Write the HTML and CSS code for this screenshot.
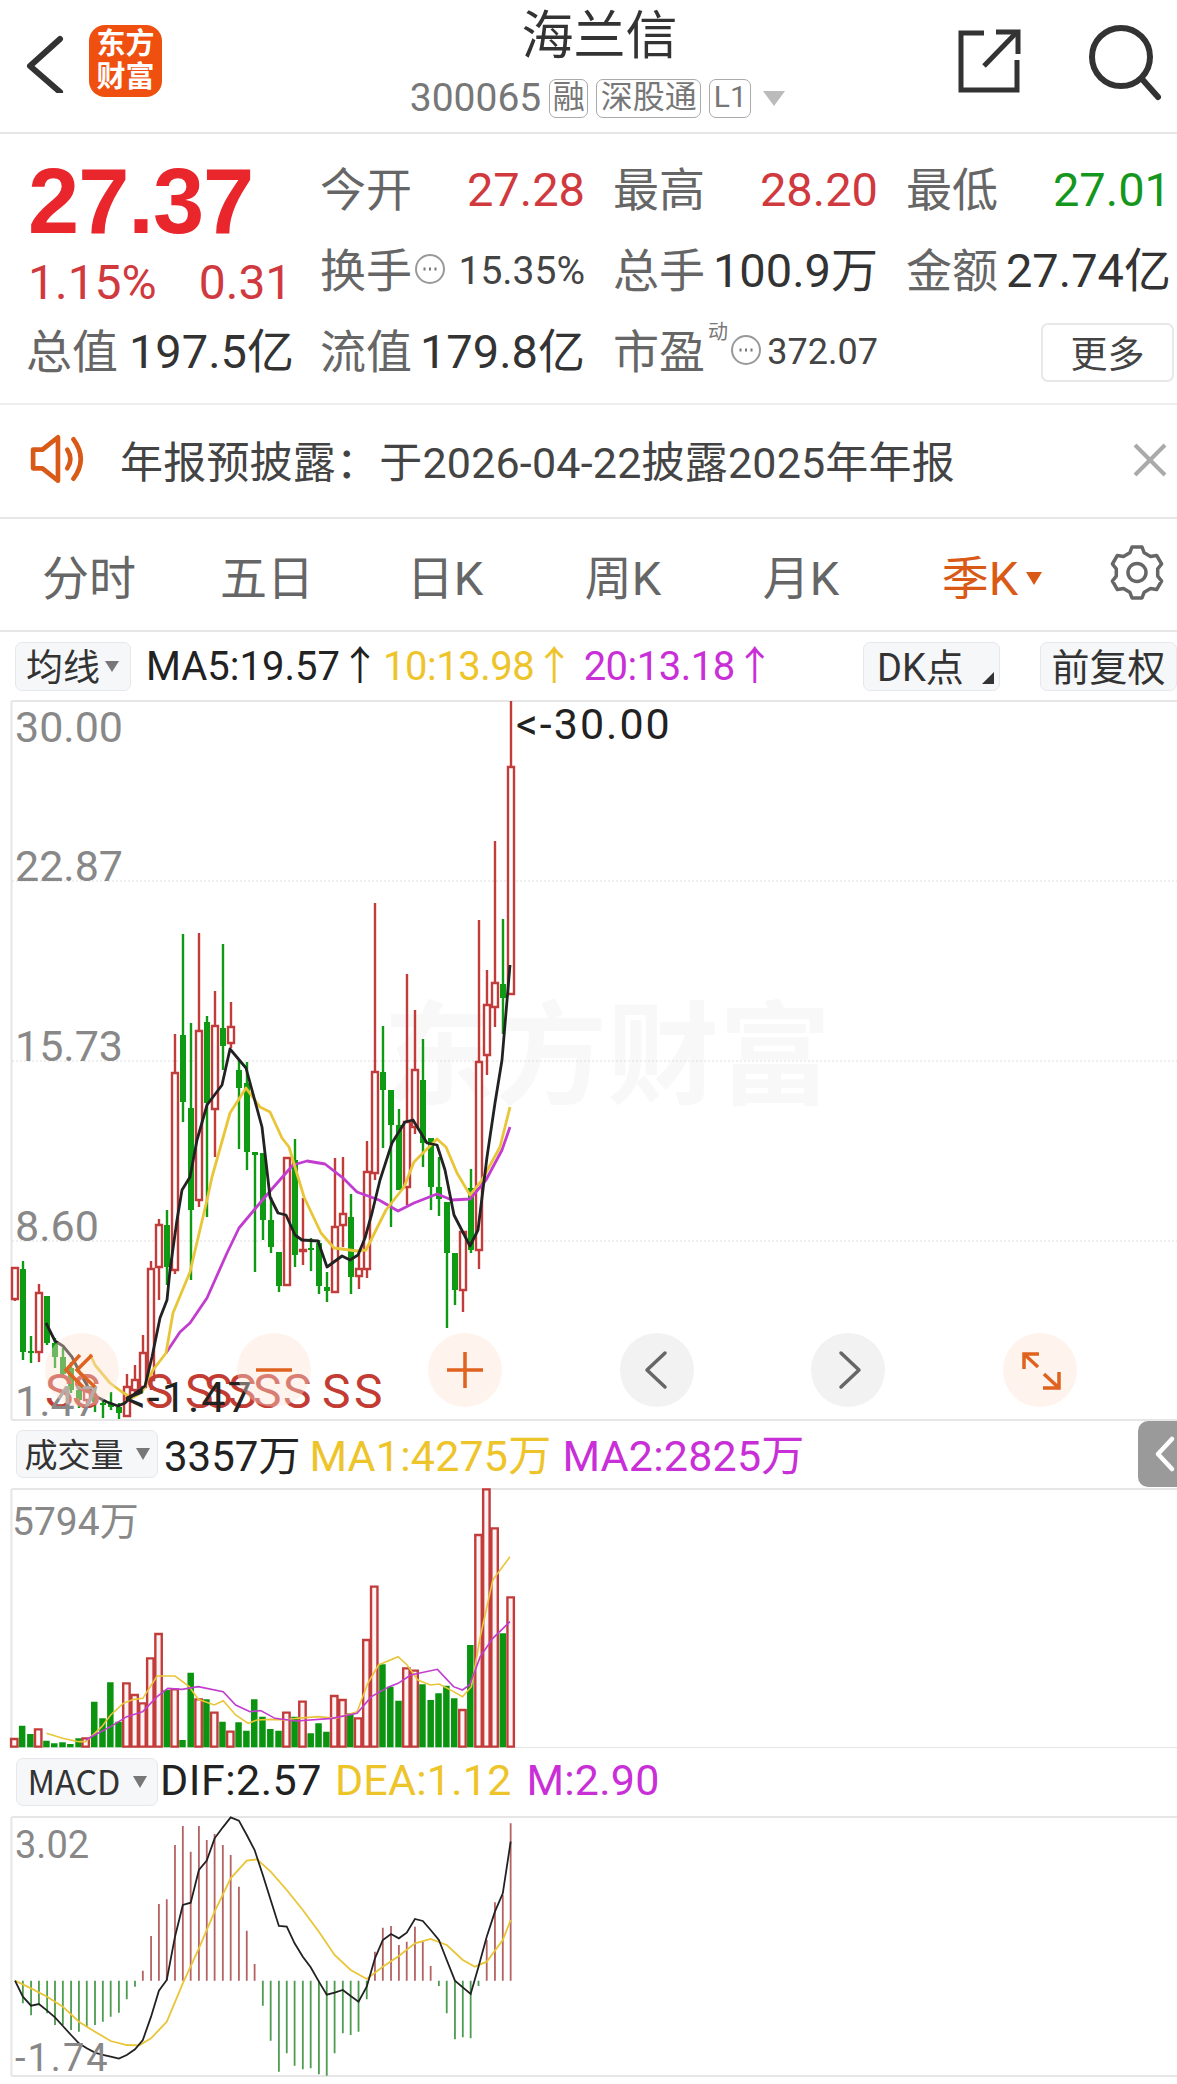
FILE: index.html
```html
<!DOCTYPE html>
<html lang="zh">
<head>
<meta charset="utf-8">
<title>海兰信</title>
<link rel="stylesheet" href="styles.css">
</head>
<body>
<header class="top">
  <div class="top-left">
    <svg class="back" viewBox="0 0 48 64" width="48" height="64"><path d="M38 10 L8 37 L38 63"/></svg>
    <div class="logo"><span>东方</span><span>财富</span></div>
  </div>
  <div class="top-mid">
    <div class="name">海兰信</div>
    <div class="sub">
      <span class="code">300065</span>
      <span class="tag tag-a">融</span>
      <span class="tag tag-b">深股通</span>
      <span class="tag tag-c">L1</span>
      <span class="sub-tri"></span>
    </div>
  </div>
  <div class="top-right">
    <svg class="ico-share" viewBox="0 0 70 70" width="70" height="70"><path d="M30 7 H7 V64 H63 V34"/><path d="M30 40 L63 6"/><path d="M42 6 H64 V28"/></svg>
    <svg class="ico-search" viewBox="0 0 80 80" width="80" height="80"><circle cx="35" cy="35" r="29"/><path d="M56 57 L72 75"/></svg>
  </div>
</header>

<section class="quote">
  <div class="quote-left">
    <div class="price">27.37</div>
    <div class="change"><span>1.15%</span><span>0.31</span></div>
    <div class="stat stat-total"><span class="lbl">总值</span><span class="val">197.5亿</span></div>
  </div>
  <div class="quote-grid">
    <div class="stat"><span class="lbl">今开</span><span class="val up">27.28</span></div>
    <div class="stat"><span class="lbl">最高</span><span class="val up">28.20</span></div>
    <div class="stat"><span class="lbl">最低</span><span class="val down">27.01</span></div>
    <div class="stat"><span class="lbl">换手</span><svg class="info" viewBox="0 0 32 32" width="32" height="32"><circle cx="16" cy="16" r="14"/><path class="dots" d="M9.500 16h2M15 16h2M20.500 16h2"/></svg><span class="val small">15.35%</span></div>
    <div class="stat"><span class="lbl">总手</span><span class="val">100.9万</span></div>
    <div class="stat"><span class="lbl">金额</span><span class="val">27.74亿</span></div>
    <div class="stat"><span class="lbl">流值</span><span class="val">179.8亿</span></div>
    <div class="stat"><span class="lbl">市盈</span><span class="sup">动</span><svg class="info" viewBox="0 0 32 32" width="32" height="32"><circle cx="16" cy="16" r="14"/><path class="dots" d="M9.500 16h2M15 16h2M20.500 16h2"/></svg><span class="val smaller">372.07</span></div>
    <div class="stat stat-end"><button class="more">更多</button></div>
  </div>
</section>

<section class="notice">
  <svg class="speaker" viewBox="0 0 56 48" width="58" height="50"><path d="M3 15 H12 L27 3 V45 L12 33 H3 Z"/><path d="M36 15 Q42 24 36 33"/><path d="M42 5 Q56 24 42 43"/></svg>
  <span class="notice-text">年报预披露：于2026-04-22披露2025年年报</span>
  <svg class="close" viewBox="0 0 34 34" width="34" height="34"><path d="M2 2 L32 32 M32 2 L2 32"/></svg>
</section>

<nav class="tabs">
  <span class="tab">分时</span>
  <span class="tab">五日</span>
  <span class="tab">日K</span>
  <span class="tab">周K</span>
  <span class="tab">月K</span>
  <span class="tab tab-on">季K<i class="tab-tri"></i></span>
  <svg class="gear" viewBox="0 0 54 54" width="54" height="55"><path d="M19.800 7.300 L22 1.500 H32 L34.200 7.300 L40.500 10.900 L46.600 9.900 L51.600 18.500 L47.700 23.400 V30.600 L51.600 35.500 L46.600 44.100 L40.500 43.100 L34.200 46.700 L32 52.500 H22 L19.800 46.700 L13.500 43.100 L7.400 44.100 L2.400 35.500 L6.300 30.600 V23.400 L2.400 18.500 L7.400 9.900 L13.500 10.900 Z"/><circle cx="27" cy="27" r="9"/></svg>
</nav>

<div class="legend">
  <span class="pill pill-ma">均线<i class="tri"></i></span>
  <span class="leg c-black">MA5:19.57↑</span>
  <span class="leg leg-b c-gold">10:13.98↑</span>
  <span class="leg leg-c c-mag">20:13.18↑</span>
  <span class="pill pill-dk">DK点<i class="corner"></i></span>
  <span class="pill pill-fq">前复权</span>
</div>

<section class="chart chart-k">
  <div class="watermark">东方财富</div>
  <svg class="plot" viewBox="0 700 1177 722" width="1177" height="722">
    <path class="axis" d="M11.500 701 V1420 M11.500 701 H1177 M11.500 1420 H1177"/>
    <path class="grid" d="M12 881 H1177 M12 1061 H1177 M12 1241 H1177"/>
    <path class="wick-r" d="M15 1268V1301M39 1284V1362M87 1380V1404M127 1374V1417M135 1365V1397M143 1335V1390M151 1261V1390M159 1219V1300M175 1034V1274M199 933V1207M215 991V1157M231 1002V1048M287 1158V1286M303 1198V1265M335 1158V1293M343 1157V1247M359 1250V1289M367 1141V1278M375 903V1180M407 974V1205M415 1010V1134M463 1232V1312M479 920V1269M487 970V1075M495 841V1027M511 701V995"/>
    <path class="body-r" d="M12 1268h6v31h-6zM36 1293h6v59h-6zM84 1388h6v12h-6zM124 1387h6v29h-6zM132 1380h6v10h-6zM140 1353h6v34h-6zM148 1269h6v111h-6zM156 1225h6v42h-6zM172 1073h6v197h-6zM196 1031h6v169h-6zM212 1026h6v83h-6zM228 1027h6v16h-6zM284 1158h6v127h-6zM300 1250h6v1h-6zM332 1227h6v65h-6zM340 1214h6v11h-6zM356 1269h6v7h-6zM364 1172h6v97h-6zM372 1072h6v101h-6zM404 1122h6v65h-6zM412 1070h6v57h-6zM460 1232h6v58h-6zM476 1062h6v188h-6zM484 1005h6v50h-6zM492 983h6v24h-6zM508 767h6v227h-6z"/>
    <path class="wick-g" d="M23 1261V1360M31 1336V1363M47 1296V1345M55 1338V1368M63 1348V1375M71 1362V1393M79 1380V1408M95 1390V1412M103 1400V1418M111 1392V1410M119 1403V1419M167 1210V1285M183 934V1122M191 1023V1280M207 1016V1217M223 944V1070M239 1060V1149M247 1062V1170M255 1152V1272M263 1153V1240M271 1197V1253M279 1252V1292M295 1139V1267M311 1238V1271M319 1240V1294M327 1272V1302M351 1194V1294M383 1026V1148M391 1090V1227M399 1109V1190M423 1039V1167M431 1138V1210M439 1157V1216M447 1202V1328M455 1253V1305M471 1169V1253M503 919V1034"/>
    <path class="body-g" d="M23 1269V1352M31 1351V1353M47 1296V1343M55 1343V1357M63 1357V1374M71 1368V1390M79 1390V1400M95 1397V1402M103 1403V1405M111 1403V1407M119 1407V1413M167 1225V1267M183 1035V1102M191 1108V1210M207 1022V1103M223 1028V1046M239 1070V1088M247 1083V1152M255 1152V1155M263 1153V1220M271 1220V1247M279 1252V1286M295 1160V1255M311 1248V1250M319 1243V1286M327 1287V1291M351 1217V1277M383 1072V1090M391 1090V1125M399 1125V1190M423 1080V1143M431 1138V1187M439 1187V1199M447 1202V1253M455 1253V1290M471 1188V1250M503 984V998"/>
    <polyline class="ma ma-mag" points="166,1353 180,1332 190,1323 207,1298 227,1253 239,1228 260,1203 271,1190 293,1165 307,1161 325,1164 343,1178 357,1192 379,1200 398,1211 414,1203 437,1194 452,1200 470,1199 486,1180 502,1150 510,1127"/>
    <polyline class="ma ma-gold" points="90,1354 95,1365 110,1383 122,1392 132,1398 142,1392 153,1370 166,1353 173,1313 190,1272 207,1200 212,1177 230,1113 246,1088 260,1107 270,1112 282,1138 289,1147 304,1197 321,1233 334,1248 357,1251 366,1250 386,1210 404,1187 414,1162 437,1139 446,1147 457,1173 470,1195 482,1180 500,1147 510,1107"/>
    <polyline class="ma ma-black" points="46,1323 55,1341 63,1346 72,1357 80,1373 88,1387 97,1397 107,1402 118,1406 125,1403 133,1395 145,1386 152,1357 160,1318 167,1300 170,1270 177,1220 182,1190 190,1177 197,1140 207,1105 222,1085 230,1049 246,1068 262,1127 270,1197 278,1213 286,1215 295,1235 302,1240 318,1241 327,1267 342,1256 350,1260 358,1255 365,1238 372,1213 380,1180 392,1143 405,1122 413,1120 427,1143 437,1145 445,1170 454,1215 470,1246 478,1230 487,1157 495,1103 502,1060 510,965"/>
    <text class="mark" x="516" y="739">&lt;-30.00</text>
    <g class="sigs">
      <text x="45" y="1408">S</text><text x="72" y="1408">S</text><text x="145" y="1408">S</text><text x="185" y="1408">S</text><text x="204" y="1408">S</text><text x="228" y="1408">S</text><text x="253" y="1408">S</text><text x="283" y="1408">S</text><text x="322" y="1408">S</text><text x="354" y="1408">S</text>
    </g>
    <text class="mark" x="124" y="1412">&lt;-1.47</text>
  </svg>
  <span class="ylab yl1">30.00</span>
  <span class="ylab yl2">22.87</span>
  <span class="ylab yl3">15.73</span>
  <span class="ylab yl4">8.60</span>
  <span class="ylab yl5">1.47</span>
  <div class="tools">
    <span class="tool tool-o"><svg viewBox="0 0 74 74" width="74" height="74"><path d="M35 22 L21 37 L38 54 M47 22 L32 37 L50 54"/></svg></span>
    <span class="tool tool-o"><svg viewBox="0 0 74 74" width="74" height="74"><path d="M19 37 H55"/></svg></span>
    <span class="tool tool-o"><svg viewBox="0 0 74 74" width="74" height="74"><path d="M19 37 H55 M37 19 V55"/></svg></span>
    <span class="tool tool-g"><svg viewBox="0 0 74 74" width="74" height="74"><path d="M45 20 L27 37 L45 54"/></svg></span>
    <span class="tool tool-g"><svg viewBox="0 0 74 74" width="74" height="74"><path d="M30 20 L48 37 L30 54"/></svg></span>
    <span class="tool tool-o"><svg viewBox="0 0 74 74" width="74" height="74"><path d="M21 36 V21 H36 M21 21 L35 34 M56 39 V55 H40 M56 55 L41 41"/></svg></span>
  </div>
</section>

<div class="ind-head">
  <span class="pill pill-ind">成交量<i class="tri tri-big"></i></span>
  <span class="ind ind-now c-black">3357万</span>
  <span class="ind ind-a c-gold">MA1:4275万</span>
  <span class="ind ind-b c-mag">MA2:2825万</span>
  <span class="handle"><svg viewBox="0 0 39 66" width="39" height="66"><path d="M34 18 L20 33 L34 48"/></svg></span>
</div>

<section class="chart chart-vol">
  <svg class="plot" viewBox="0 174 3296 780" width="1177" height="260" preserveAspectRatio="none">
    <path class="axis" d="M32 177 V954 M32 177 H3296 M32 954 H3296"/>
    <path class="vol-g" d="M62 887V952M85 912V952M130 932V952M152 940V952M175 937V952M197 942V952M220 925V952M264 815V952M287 865V952M309 757V952M332 875V952M467 780V952M511 930V952M534 728V952M578 808V952M623 875V952M668 877V952M690 902V952M712 808V952M735 860V952M757 897V952M780 902V952M825 860V952M870 910V952M892 880V952M914 905V952M981 850V952M1071 703V952M1093 770V952M1116 812V952M1183 763V952M1206 810V952M1228 790V952M1250 767V952M1272 805V952M1317 645V952M1408 610V952"/>
    <path class="vol-r" d="M31 927V950H49V927ZM98 898V950H116V898ZM231 925V950H249V925ZM345 760V950H363V760ZM368 795V950H386V795ZM390 820V950H408V820ZM412 685V950H430V685ZM435 612V950H453V612ZM480 778V950H498V778ZM547 808V950H565V808ZM591 848V950H609V848ZM636 905V950H654V905ZM793 848V950H811V848ZM838 815V950H856V815ZM927 798V950H945V798ZM950 810V950H968V810ZM994 865V950H1012V865ZM1017 630V950H1035V630ZM1039 470V950H1057V470ZM1129 715V950H1147V715ZM1152 722V950H1170V722ZM1286 840V950H1304V840ZM1331 315V950H1349V315ZM1353 178V950H1371V178ZM1376 295V950H1394V295ZM1421 502V950H1439V502Z"/>
    <polyline class="thin ma-gold" points="130,910 175,925 220,935 240,935 265,910 285,890 310,855 345,820 375,808 400,805 440,738 490,738 530,770 555,808 600,825 625,812 660,855 695,880 720,870 760,868 800,870 830,865 890,860 940,865 1000,845 1030,760 1060,705 1115,680 1140,705 1170,750 1205,765 1230,762 1270,785 1295,800 1320,770 1345,620 1380,450 1428,380"/>
    <polyline class="thin ma-mag" points="240,930 265,915 310,890 355,860 400,845 440,800 470,775 510,778 555,770 625,785 660,825 700,845 730,842 770,865 830,873 930,865 1000,850 1040,800 1090,770 1115,760 1150,735 1225,718 1270,770 1295,780 1315,765 1345,680 1380,625 1428,575"/>
  </svg>
  <span class="ylab yl-vol">5794万</span>
</section>

<div class="ind-head">
  <span class="pill pill-ind pill-macd">MACD<i class="tri tri-big"></i></span>
  <span class="ind ind-dif c-black">DIF:2.57</span>
  <span class="ind c-gold">DEA:1.12</span>
  <span class="ind ind-m c-mag">M:2.90</span>
</div>

<section class="chart chart-macd">
  <svg class="plot" viewBox="0 228 3296 786" width="1177" height="262" preserveAspectRatio="none">
    <path class="axis" d="M32 231 V1008 M32 231 H3296 M32 1008 H3296"/>
    <path class="hist-g" d="M64 722V790M87 722V826M109 722V795M132 722V820M154 722V855M176 722V855M199 722V870M221 722V875M243 722V862M266 722V855M288 722V845M310 722V830M333 722V818M355 722V778M378 722V740M736 722V797M758 722V902M781 722V995M803 722V940M825 722V977M848 722V988M870 722V985M893 722V1003M915 722V1007M937 722V940M960 722V880M982 722V885M1004 722V875M1027 722V778M1229 722V738M1251 722V820M1274 722V898M1296 722V892M1318 722V895M1340 722V738"/>
    <path class="hist-r" d="M400 722V692M423 722V588M445 722V492M467 722V478M490 722V315M512 722V258M534 722V335M557 722V258M579 722V300M601 722V282M624 722V315M646 722V345M669 722V440M691 722V572M713 722V672M1050 722V635M1072 722V563M1095 722V558M1117 722V615M1139 722V605M1162 722V560M1184 722V605M1206 722V678M1363 722V600M1386 722V487M1408 722V465M1430 722V250"/>
    <polyline class="thin2 ma-gold" points="42,722 87,745 132,770 176,800 221,845 266,875 310,903 355,915 390,916 423,895 467,845 512,730 557,625 601,515 646,415 691,362 720,358 758,395 803,450 848,510 893,575 937,645 982,690 1027,717 1072,680 1117,648 1162,610 1206,597 1251,615 1296,660 1330,680 1363,665 1408,600 1430,540"/>
    <polyline class="thin2 ma-black" points="42,722 64,770 87,797 109,792 132,812 154,832 176,858 199,885 221,910 243,925 266,938 288,945 310,950 333,956 355,945 378,928 400,900 423,830 445,752 467,720 490,590 512,495 534,488 557,390 579,362 601,295 624,262 646,232 669,242 691,285 713,330 736,405 758,480 781,558 803,560 825,610 848,650 870,682 893,725 915,764 937,758 960,750 982,768 1004,785 1027,740 1050,655 1072,600 1095,582 1117,595 1139,578 1162,537 1184,543 1206,570 1229,600 1251,660 1274,722 1296,742 1318,762 1340,680 1363,590 1386,515 1408,460 1430,305"/>
  </svg>
  <span class="ylab yl-m1">3.02</span>
  <span class="ylab yl-m2">-1.74</span>
</section>
</body>
</html>
```

FILE: styles.css
```css
* { box-sizing: border-box; }
html, body { margin: 0; padding: 0; background: #fff; }
body {
  width: 1177px;
  height: 2084px;
  overflow: hidden;
  font-family: Roboto, "Noto Sans CJK SC", sans-serif;
  color: #333;
}
svg { display: block; fill: none; }

/* header */
.top {
  display: grid;
  grid-template-columns: 1fr auto 1fr;
  height: 134px;
  padding-left: 22px;
  border-bottom: 2px solid #e6e6e6;
}
.top-left { display: flex; align-items: flex-start; padding-top: 25px; }
.back { margin-top: 4px; }
.back path { stroke: #333; stroke-width: 6; stroke-linecap: round; stroke-linejoin: round; }
.logo {
  width: 73px;
  height: 72px;
  margin-left: 19px;
  border-radius: 16px;
  background: #f0500f;
  color: #fff;
  font-size: 29px;
  font-weight: 700;
  line-height: 33px;
  display: flex;
  flex-direction: column;
  align-items: center;
  justify-content: center;
}
.top-mid { display: flex; flex-direction: column; align-items: center; }
.name { font-size: 52px; line-height: 70px; padding-top: 2px; color: #333; }
.sub { display: flex; align-items: center; height: 40px; margin-top: 6px; margin-left: -4px; }
.code { font-size: 39px; color: #777; margin-right: 8px; }
.tag {
  height: 39px;
  border: 1.5px solid #aaa;
  border-radius: 7px;
  font-size: 32px;
  line-height: 34px;
  color: #777;
  text-align: center;
  margin-right: 8px;
}
.tag-a { width: 39px; }
.tag-b { width: 105px; }
.tag-c { width: 42px; font-size: 30px; }
.sub-tri {
  width: 0;
  height: 0;
  margin-left: 4px;
  border-left: 11px solid transparent;
  border-right: 11px solid transparent;
  border-top: 15px solid #bbb;
}
.top-right { display: flex; justify-content: flex-end; align-items: flex-start; padding-top: 20px; padding-right: 11px; }
.ico-share { margin-top: 6px; margin-right: 62px; }
.ico-share path { stroke: #333; stroke-width: 5; }
.ico-search { margin-top: 2px; }
.ico-search circle, .ico-search path { stroke: #333; stroke-width: 6; stroke-linecap: round; }

/* quote */
.quote { display: flex; height: 271px; border-bottom: 2px solid #eee; }
.quote-left { width: 320px; padding: 32px 26px 0 28px; flex: none; }
.price {
  font-family: "Liberation Sans", sans-serif;
  font-weight: 700;
  font-size: 92px;
  line-height: 70px;
  letter-spacing: -1px;
  color: #e8262c;
}
.change {
  display: flex;
  gap: 42px;
  margin-top: 27px;
  margin-bottom: 29px;
  font-size: 48px;
  line-height: 40px;
  color: #d0393e;
}
.stat-total { margin-left: -2px; }
.quote-grid {
  display: grid;
  grid-template-columns: 265px 265px 265px;
  grid-auto-rows: 40px;
  column-gap: 28px;
  row-gap: 41px;
  padding-top: 36px;
}
.stat { display: flex; align-items: center; justify-content: space-between; height: 40px; }
.lbl { font-size: 46px; line-height: 40px; color: #666; flex: none; }
.val { font-size: 47px; line-height: 40px; color: #333; margin-left: auto; white-space: nowrap; }
.val.up { color: #d0393e; }
.val.down { color: #14971c; }
.val.small { font-size: 39px; color: #444; }
.val.smaller { font-size: 36px; color: #444; }
.info { flex: none; margin-left: 2px; margin-top: -4px; }
.info circle { stroke: #999; stroke-width: 2; }
.dots { stroke: #777; stroke-width: 3; }
.sup {
  align-self: flex-start;
  margin-top: -10px;
  font-size: 20px;
  line-height: 20px;
  color: #777;
  margin-left: 3px;
  flex: none;
}
.stat-end { justify-content: flex-end; }
.more {
  width: 133px;
  height: 59px;
  margin-right: -3px;
  background: #fff;
  border: 2px solid #e8e8e8;
  border-radius: 7px;
  font-family: "Noto Sans CJK SC", sans-serif;
  font-size: 37px;
  line-height: 50px;
  color: #444;
  padding: 0;
  flex: none;
}

/* notice */
.notice {
  display: flex;
  align-items: center;
  height: 114px;
  padding: 0 10px 4px 30px;
  border-bottom: 2px solid #e6e6e6;
}
.speaker path { stroke: #d95a17; stroke-width: 4.5; stroke-linejoin: round; stroke-linecap: round; }
.notice-text { font-size: 43px; color: #444; margin-left: 32px; white-space: nowrap; letter-spacing: 0.2px; }
.close { margin-left: auto; margin-top: 2px; }
.close path { stroke: #aaa; stroke-width: 4; }

/* tabs */
.tabs {
  display: flex;
  align-items: center;
  height: 113px;
  border-bottom: 2px solid #e6e6e6;
}
.tab { width: 178px; flex: none; text-align: center; font-size: 47px; color: #666; }
.tab-on { color: #d95a17; padding-left: 26px; white-space: nowrap; }
.tab-tri {
  display: inline-block;
  width: 0;
  height: 0;
  margin-left: 8px;
  vertical-align: 10px;
  border-left: 8px solid transparent;
  border-right: 8px solid transparent;
  border-top: 13px solid #d95a17;
}
.gear { margin-left: 42px; margin-top: -4px; }
.gear path, .gear circle { stroke: #666; stroke-width: 3.5; stroke-linejoin: round; }

/* legends */
.legend { display: flex; align-items: center; height: 68px; padding-left: 15px; }
.pill {
  display: flex;
  align-items: center;
  justify-content: center;
  height: 49px;
  background: #f6f7f9;
  border: 1.5px solid #e6e8ec;
  border-radius: 7px;
  padding-bottom: 3px;
  color: #333;
  font-family: "Noto Sans CJK SC", sans-serif;
  position: relative;
  flex: none;
}
.pill-ma { width: 116px; font-size: 37px; justify-content: flex-start; padding-left: 10px; }
.tri {
  width: 0;
  height: 0;
  margin-left: 5px;
  margin-top: 3px;
  border-left: 7px solid transparent;
  border-right: 7px solid transparent;
  border-top: 11px solid #777;
}
.tri-big { margin-left: 12px; border-top-width: 12px; border-left-width: 7px; border-right-width: 7px; }
.leg { font-size: 40px; margin-left: 15px; margin-bottom: 6px; white-space: nowrap; }
.leg-b { margin-left: 3px; letter-spacing: -0.5px; }
.leg-c { margin-left: 10px; letter-spacing: -0.5px; }
.c-black { color: #222; }
.c-gold { color: #eec42b; }
.c-mag { color: #c92fd6; }
.pill-dk { width: 137px; margin-left: auto; font-size: 38px; font-family: Roboto, "Noto Sans CJK SC", sans-serif; justify-content: flex-start; padding-left: 13px; }
.corner {
  position: absolute;
  right: 5px;
  bottom: 6px;
  width: 0;
  height: 0;
  border-left: 12px solid transparent;
  border-bottom: 12px solid #333;
}
.pill-fq { width: 137px; margin-left: 40px; font-size: 38px; }

.ind-head { display: flex; align-items: center; height: 68px; padding-left: 16px; position: relative; }
.pill-ind { width: 142px; height: 48px; font-size: 33px; }
.pill-macd { font-size: 34px; }
.ind { font-size: 43px; margin-left: 13px; margin-bottom: 4px; white-space: nowrap; letter-spacing: 0.2px; }
.ind-now { font-size: 42px; margin-left: 6px; letter-spacing: 0; }
.ind-a { margin-left: 9px; }
.ind-b { margin-left: 11px; }
.ind-dif { letter-spacing: 0.5px; margin-left: 2px; }
.ind-m { margin-left: 15px; }
.handle {
  position: absolute;
  right: 0;
  top: 1px;
  width: 39px;
  height: 66px;
  background: #9a9a9a;
  border-radius: 10px 0 0 10px;
}
.handle path { stroke: #fff; stroke-width: 4.5; stroke-linecap: round; stroke-linejoin: round; }

/* charts */
.chart { position: relative; width: 1177px; }
.chart-k { height: 720px; }
.chart-vol { height: 260px; }
.chart-macd { height: 262px; }
.plot { position: relative; }
.axis { stroke: #e6e6e6; stroke-width: 2; vector-effect: non-scaling-stroke; }
.grid { stroke: #ddd; stroke-width: 1; stroke-dasharray: 2 2; }
.wick-r { stroke: #c23c3c; stroke-width: 2.4; }
.body-r { fill: #fff; stroke: #c23c3c; stroke-width: 2.4; }
.wick-g { stroke: #0f9a14; stroke-width: 2.4; }
.body-g { stroke: #0f9a14; stroke-width: 6; }
.ma { fill: none; stroke-width: 2.8; stroke-linejoin: round; }
.ma-black { stroke: #222; }
.ma-gold { stroke: #e9c538; }
.ma-mag { stroke: #c23ccf; }
.mark { font-size: 43px; fill: #222; letter-spacing: 2px; font-family: Roboto, sans-serif; }
.sigs text { font-size: 48px; fill: #c23c34; font-family: Roboto, sans-serif; }
.vol-g { stroke: #0a940f; stroke-width: 6.5; vector-effect: non-scaling-stroke; }
.vol-r { fill: #fff3f3; stroke: #c23c3c; stroke-width: 2.4; vector-effect: non-scaling-stroke; }
.thin { fill: none; stroke-width: 1.6; vector-effect: non-scaling-stroke; }
.thin2 { fill: none; stroke-width: 1.8; vector-effect: non-scaling-stroke; }
.hist-g { stroke: #4d9c4f; stroke-width: 1.8; vector-effect: non-scaling-stroke; }
.hist-r { stroke: #b46262; stroke-width: 1.8; vector-effect: non-scaling-stroke; }

.watermark {
  position: absolute;
  left: 383px;
  top: 296px;
  font-size: 112px;
  line-height: 124px;
  font-weight: 700;
  color: #f8f8f8;
  white-space: nowrap;
}
.ylab { position: absolute; left: 15px; font-size: 43px; line-height: 40px; color: #888; white-space: nowrap; }
.yl1 { top: 7px; }
.yl2 { top: 146px; }
.yl3 { top: 326px; }
.yl4 { top: 506px; }
.yl5 { top: 681px; }
.yl-vol { left: 12px; top: 14px; font-size: 39px; }
.yl-m1 { top: 9px; font-size: 38px; }
.yl-m2 { top: 222px; font-size: 38px; letter-spacing: 2px; }

.tools {
  position: absolute;
  left: 45px;
  right: 100px;
  top: 633px;
  display: flex;
  justify-content: space-between;
}
.tool { width: 74px; height: 74px; border-radius: 50%; flex: none; }
.tool-o { background: rgba(252, 226, 210, 0.4); }
.tool-g { background: #f2f2f2; }
.tool-o path { stroke: #e0621f; stroke-width: 3.5; }
.tool-g path { stroke: #666; stroke-width: 3.5; stroke-linecap: round; stroke-linejoin: round; }
```
